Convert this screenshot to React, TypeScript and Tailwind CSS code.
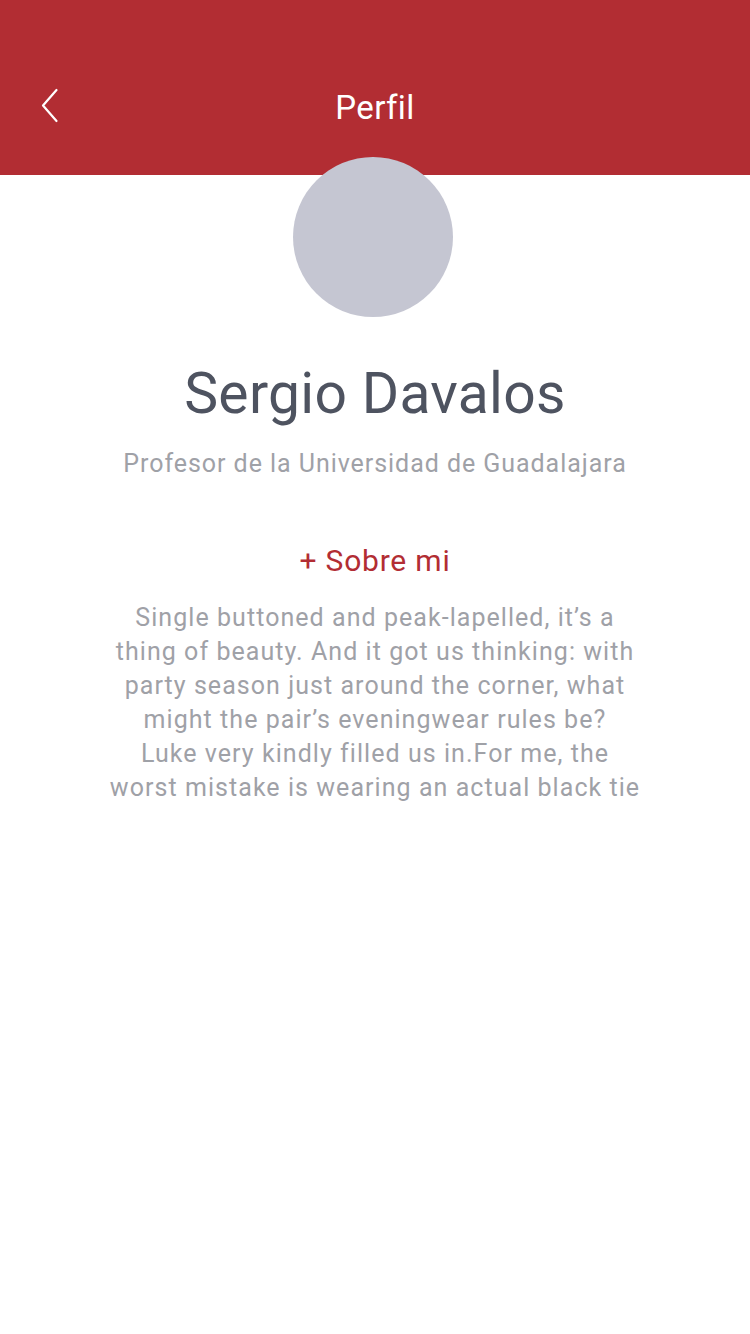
import React from "react";

const lines = [
  "Single buttoned and peak-lapelled, it’s a",
  "thing of beauty. And it got us thinking: with",
  "party season just around the corner, what",
  "might the pair’s eveningwear rules be?",
  "Luke very kindly filled us in.For me, the",
  "worst mistake is wearing an actual black tie",
];

export default function App() {
  return (
    <div className="w-[750px] min-h-[1334px] bg-white flex flex-col" style={{ fontFamily: "Roboto, 'Noto Sans', sans-serif" }}>
      <div className="h-[175px] bg-[#b22d33] flex items-start px-[36px] pt-[84px] relative">
        <svg width="28" height="40" viewBox="0 0 28 40" className="mt-[2px]">
          <path d="M20.5 4 L7 19.5 L20.5 35" fill="none" stroke="#fff" strokeWidth="2.2" strokeLinecap="round" strokeLinejoin="round" />
        </svg>
        <div className="absolute left-0 right-0 top-[84px] text-center text-white text-[33px] tracking-[0.4px] leading-[48px]">Perfil</div>
      </div>
      <div className="flex flex-col items-center -mt-[18px]">
        <div className="relative z-10 w-[160px] h-[160px] rounded-full bg-[#c5c6d2] -ml-[4px]"></div>
        <div className="mt-[42px] text-[57px] leading-[70px] tracking-[0.3px] text-[#4e5360]">Sergio Davalos</div>
        <div className="mt-[18px] text-[25px] leading-[34px] tracking-[0.95px] text-[#9fa1a7]">Profesor de la Universidad de Guadalajara</div>
        <div className="mt-[60px] text-[30px] leading-[40px] tracking-[0.8px] text-[#b22d33]">+ Sobre mi</div>
        <p className="mt-[20px] flex flex-col items-center text-center text-[25px] leading-[34px] tracking-[1.05px] text-[#9fa1a7]">
          {lines.map((l, i) => (
            <span key={i} className="whitespace-nowrap">{l}</span>
          ))}
        </p>
      </div>
    </div>
  );
}
